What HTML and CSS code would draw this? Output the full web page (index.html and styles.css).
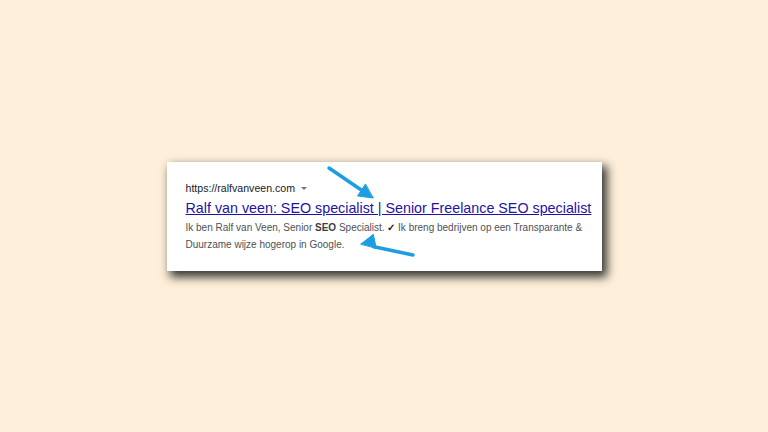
FILE: index.html
```html
<!DOCTYPE html>
<html>
<head>
<meta charset="utf-8">
<link rel="stylesheet" href="styles.css">
</head>
<body>
<div class="stage">
  <div class="card">
    <div class="url">https://ralfvanveen.com <span class="caret"></span></div>
    <a class="title" href="#">Ralf van veen: SEO specialist | Senior Freelance SEO specialist</a>
    <div class="desc">Ik ben Ralf van Veen, Senior <b>SEO</b> Specialist. <span class="check">✓</span> Ik breng bedrijven op een Transparante &amp; Duurzame wijze hogerop in Google.</div>
  </div>
</div>
<svg class="arrows" viewBox="0 0 768 432" width="768" height="432">
  <g fill="#1d9ee2" stroke="#1d9ee2" stroke-linecap="round">
    <line x1="329" y1="168" x2="362" y2="190.5" stroke-width="3.5"/>
    <polygon points="373,198 357.5,195.9 365.3,184.3" stroke-width="1"/>
    <line x1="413" y1="255" x2="374" y2="246.8" stroke-width="3.5"/>
    <polygon points="361,244 373.3,234.3 376.2,248" stroke-width="1"/>
  </g>
</svg>
</body>
</html>
```
FILE: styles.css
```css
html, body {
  margin: 0;
  padding: 0;
}
body {
  background: #fdefd9;
  font-family: "Liberation Sans", Arial, sans-serif;
  width: 768px;
  height: 432px;
  overflow: hidden;
}
.stage {
  width: 768px;
  height: 432px;
  display: flex;
  align-items: center;
  justify-content: center;
}
.card {
  box-sizing: border-box;
  width: 435px;
  height: 109px;
  background: #ffffff;
  padding: 19px 10px 0 19px;
  box-shadow: 4px 5px 9px 1px rgba(20, 20, 20, 0.85);
}
.url {
  font-size: 10.6px;
  color: #202124;
  line-height: 14px;
  display: flex;
  align-items: center;
  gap: 6px;
}
.caret {
  width: 0;
  height: 0;
  border-left: 3px solid transparent;
  border-right: 3px solid transparent;
  border-top: 3px solid #70757a;
  margin-top: 1px;
}
.title {
  display: block;
  margin-top: 4px;
  font-size: 14.3px;
  line-height: 18px;
  color: #1f12a6;
  text-decoration: underline;
  white-space: nowrap;
}
.desc {
  margin-top: 2px;
  font-size: 10px;
  line-height: 17px;
  color: #4d5156;
}
.desc b {
  color: #3c4043;
}
.check {
  color: #202124;
  font-weight: bold;
}
.arrows {
  position: fixed;
  left: 0;
  top: 0;
  pointer-events: none;
}
```
